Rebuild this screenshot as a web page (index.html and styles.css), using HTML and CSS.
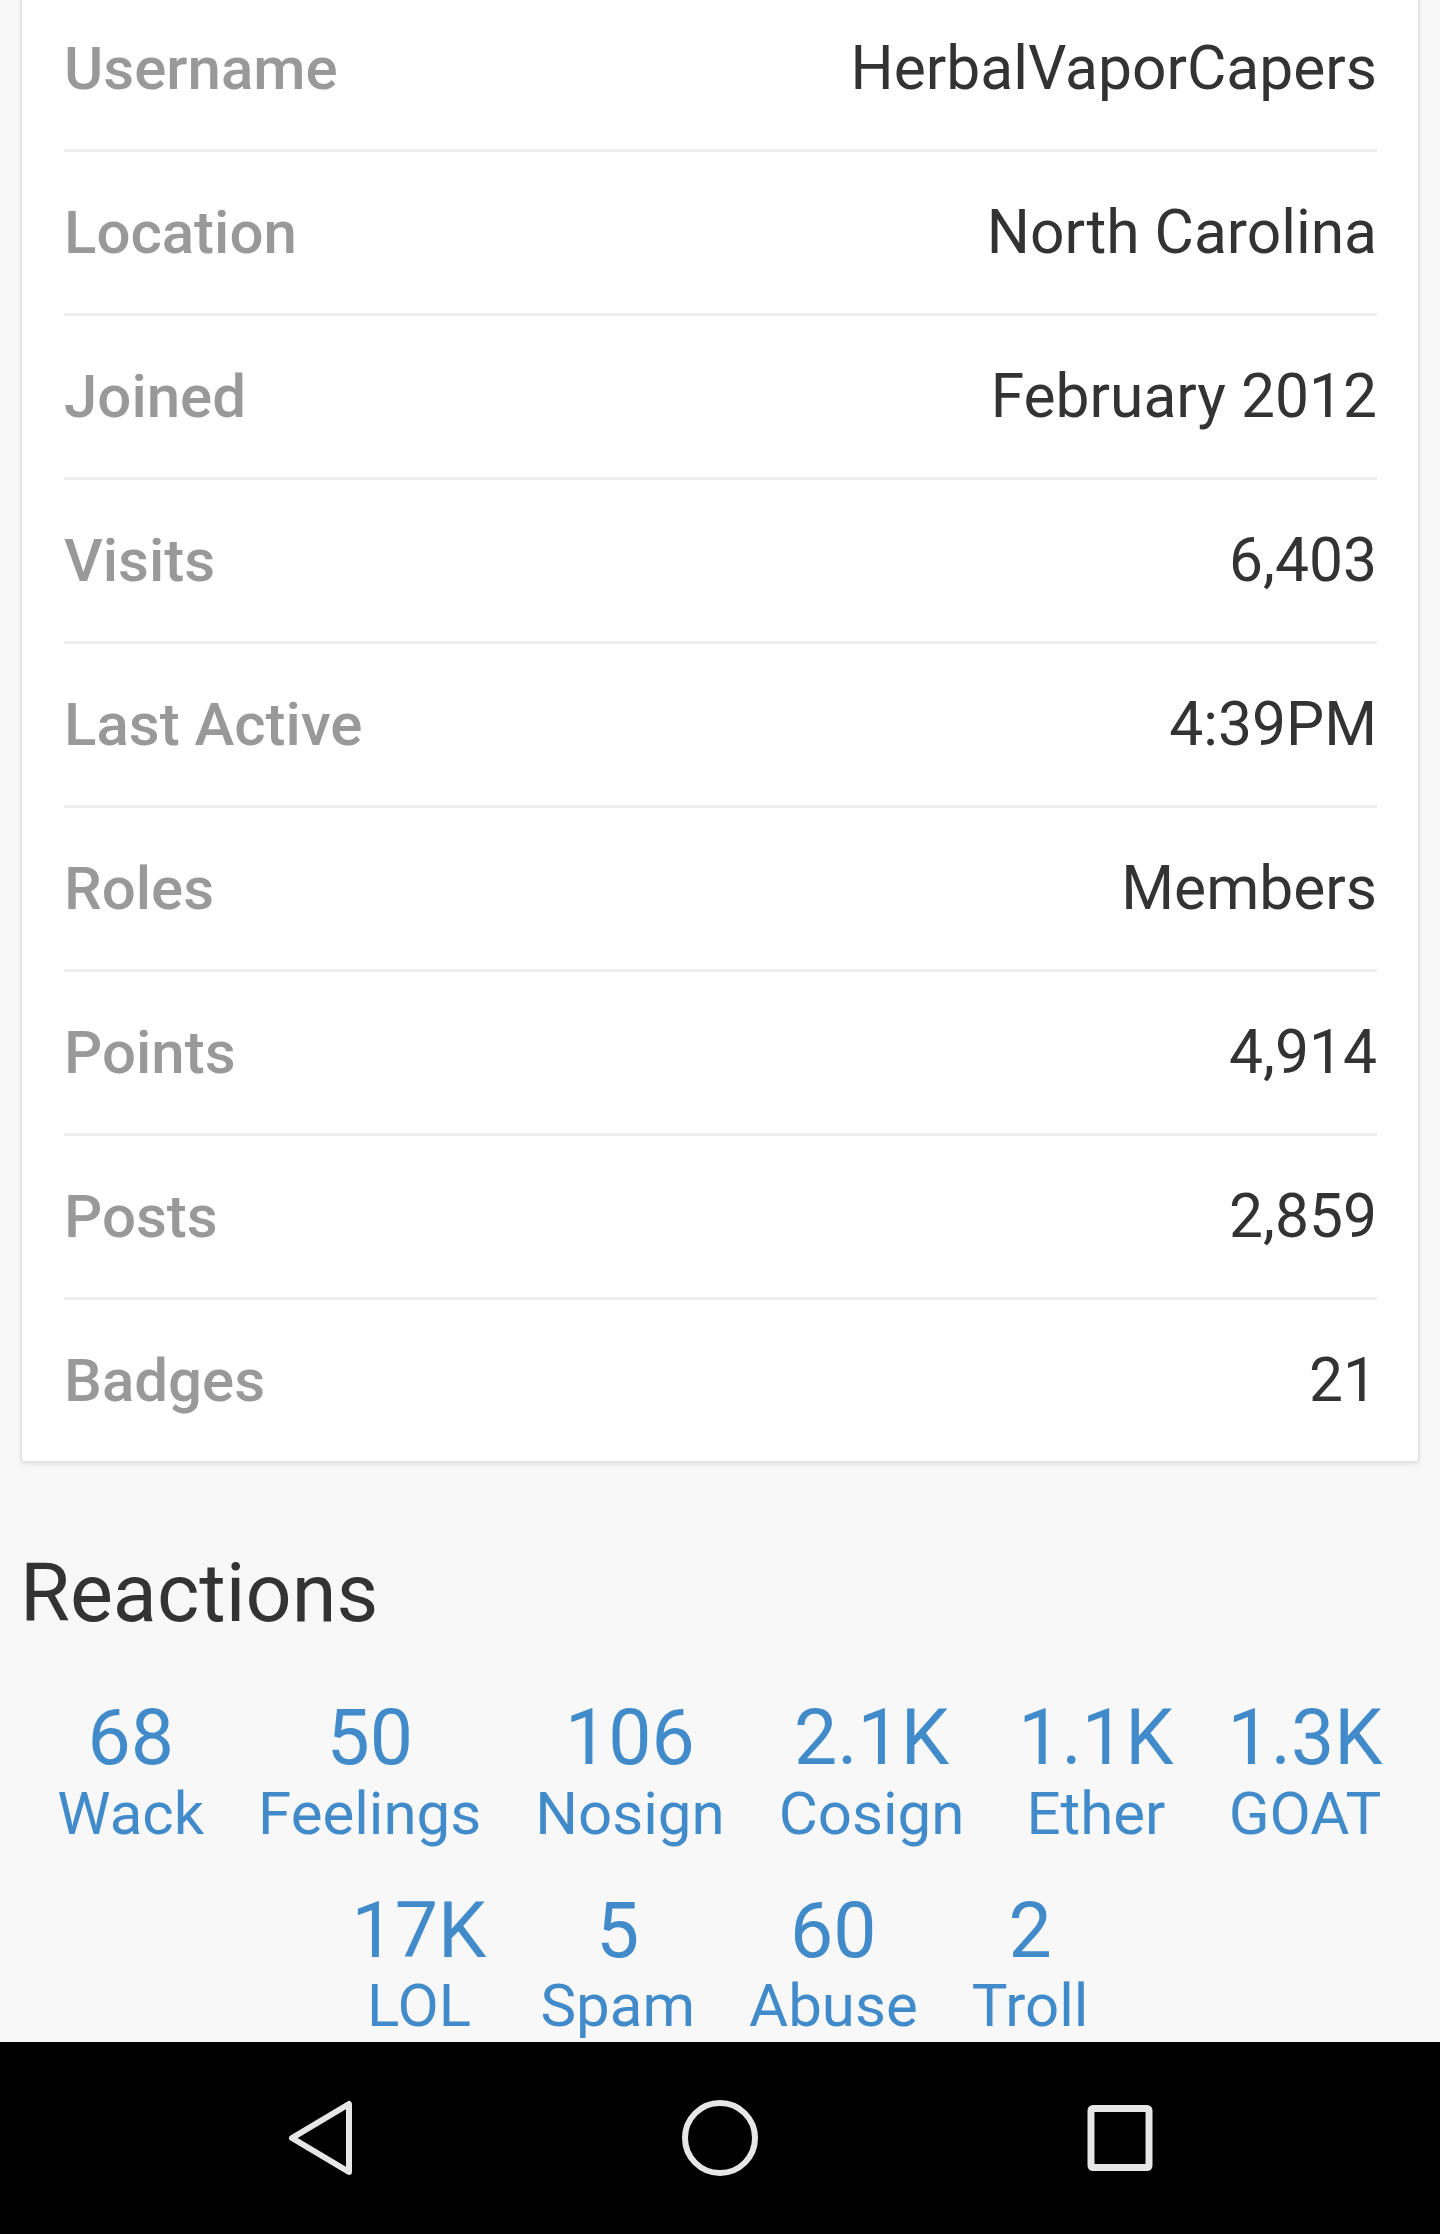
FILE: index.html
```html
<!DOCTYPE html>
<html lang="en">
<head>
  <meta charset="UTF-8">
  <title>HerbalVaporCapers - Profile</title>
  <link rel="stylesheet" href="styles.css">
</head>
<body>
  <div class="screen">
    <div class="content">
      <div class="card">
        <div class="row"><span class="label">Username</span><span class="value">HerbalVaporCapers</span></div>
        <div class="row"><span class="label">Location</span><span class="value">North Carolina</span></div>
        <div class="row"><span class="label">Joined</span><span class="value">February 2012</span></div>
        <div class="row"><span class="label">Visits</span><span class="value">6,403</span></div>
        <div class="row"><span class="label">Last Active</span><span class="value">4:39PM</span></div>
        <div class="row"><span class="label">Roles</span><span class="value">Members</span></div>
        <div class="row"><span class="label">Points</span><span class="value">4,914</span></div>
        <div class="row"><span class="label">Posts</span><span class="value">2,859</span></div>
        <div class="row"><span class="label">Badges</span><span class="value">21</span></div>
      </div>

      <h2 class="section-title">Reactions</h2>

      <div class="reactions">
        <a class="reaction"><span class="count">68</span><span class="name">Wack</span></a>
        <a class="reaction"><span class="count">50</span><span class="name">Feelings</span></a>
        <a class="reaction"><span class="count">106</span><span class="name">Nosign</span></a>
        <a class="reaction"><span class="count">2.1K</span><span class="name">Cosign</span></a>
        <a class="reaction"><span class="count">1.1K</span><span class="name">Ether</span></a>
        <a class="reaction"><span class="count">1.3K</span><span class="name">GOAT</span></a>
        <a class="reaction"><span class="count">17K</span><span class="name">LOL</span></a>
        <a class="reaction"><span class="count">5</span><span class="name">Spam</span></a>
        <a class="reaction"><span class="count">60</span><span class="name">Abuse</span></a>
        <a class="reaction"><span class="count">2</span><span class="name">Troll</span></a>
      </div>
    </div>
  </div>

  <div class="navbar">
    <div class="nav-btn">
      <svg width="80" height="80" viewBox="0 0 80 80"><path d="M69 6 L69 74 L12 40 Z" fill="none" stroke="#e6e6e6" stroke-width="6" stroke-linejoin="round"/></svg>
    </div>
    <div class="nav-btn">
      <svg width="80" height="80" viewBox="0 0 80 80"><circle cx="40" cy="40" r="35" fill="none" stroke="#e6e6e6" stroke-width="6"/></svg>
    </div>
    <div class="nav-btn">
      <svg width="80" height="80" viewBox="0 0 80 80"><rect x="11" y="10.5" width="58" height="59" rx="2" fill="none" stroke="#e6e6e6" stroke-width="7"/></svg>
    </div>
  </div>
</body>
</html>
```

FILE: styles.css
```css
body {
  margin: 0;
  background-color: #f8f8f8;
  font-family: Roboto, "Noto Sans", sans-serif;
}
.screen {
  height: 2042px;
  overflow: hidden;
}
.content {
  padding: 0 16px;
}
.card {
  margin: -12px 6px 0;
  padding: 0 41px 0 42px;
  background-color: #fff;
  border-radius: 3px;
  box-shadow: 0 0 0 2px #e4e4e4, 0 3px 5px rgba(0, 0, 0, 0.1);
}
.row {
  display: flex;
  justify-content: space-between;
  align-items: center;
  height: 161px;
  border-bottom: 3px solid #eee;
  font-size: 60px;
}
.row:last-child {
  border-bottom: none;
}
.label {
  color: #999;
  font-weight: 500;
}
.value {
  color: #333;
  font-size: 60.5px;
}
.section-title {
  margin: 89px 0 58px 4px;
  font-size: 81px;
  line-height: 88px;
  font-weight: 400;
  color: #333;
}
.reactions {
  display: flex;
  flex-wrap: wrap;
  justify-content: center;
  column-gap: 54px;
  row-gap: 42px;
}
.reaction {
  display: flex;
  flex-direction: column;
  align-items: center;
  color: #428bca;
  line-height: 1.1;
}
.count {
  font-size: 77px;
}
.name {
  font-size: 60px;
}
.navbar {
  display: flex;
  justify-content: center;
  align-items: center;
  height: 192px;
  background-color: #000;
}
.nav-btn {
  width: 400px;
  display: flex;
  justify-content: center;
}
.nav-btn svg {
  display: block;
}
```
